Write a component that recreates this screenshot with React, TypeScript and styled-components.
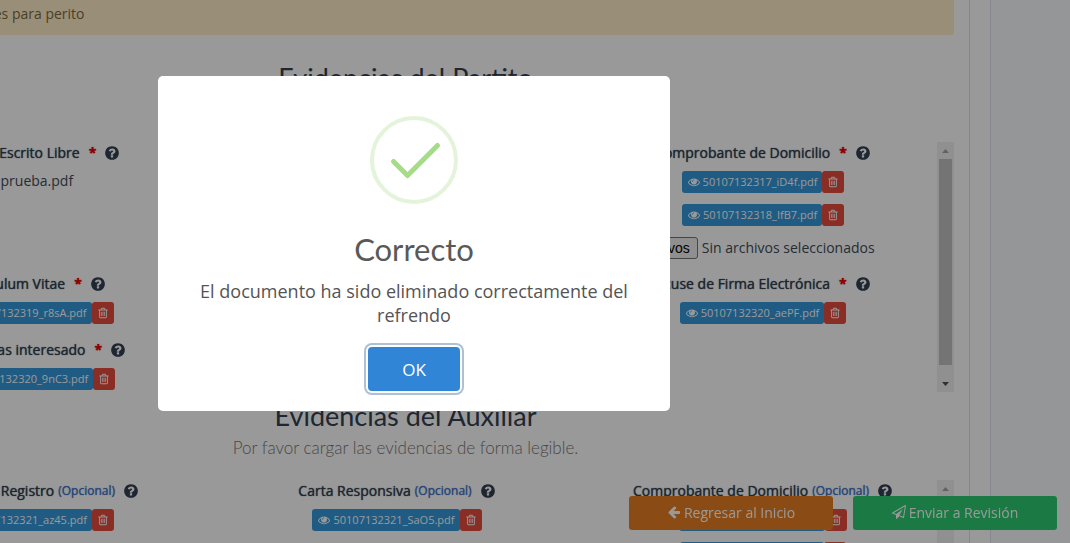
import React from 'react';
import styled, { createGlobalStyle } from 'styled-components';

const GlobalStyle = createGlobalStyle`
  * { box-sizing: border-box; }
  html, body, #root { height: 100%; }
  body {
    margin: 0;
    overflow: hidden;
    background: #f9fafc;
    color: #3e4b5b;
    font-family: 'Open Sans', sans-serif;
    font-size: 14px;
    line-height: 22px;
  }
  button { font-family: inherit; }
`;

const paths = {
  eye: 'M1664 960q-152-236-381-353 61 104 61 225 0 185-131.5 316.5t-316.5 131.5-316.5-131.5-131.5-316.5q0-121 61-225-229 117-381 353 133 205 333.5 326.5t434.5 121.5 434.5-121.5 333.5-326.5zm-720-384q0-20-14-34t-34-14q-125 0-214.5 89.5t-89.5 214.5q0 20 14 34t34 14 34-14 14-34q0-86 61-147t147-61q20 0 34-14t14-34zm848 384q0 34-20 69-140 230-376.5 368.5t-499.5 138.5-499.5-139-376.5-368q-20-35-20-69t20-69q140-229 376.5-368t499.5-139 499.5 139 376.5 368q20 35 20 69z',
  trash: 'M704 736v576q0 14-9 23t-23 9h-64q-14 0-23-9t-9-23v-576q0-14 9-23t23-9h64q14 0 23 9t9 23zm256 0v576q0 14-9 23t-23 9h-64q-14 0-23-9t-9-23v-576q0-14 9-23t23-9h64q14 0 23 9t9 23zm256 0v576q0 14-9 23t-23 9h-64q-14 0-23-9t-9-23v-576q0-14 9-23t23-9h64q14 0 23 9t9 23zm128 724v-948h-896v948q0 22 7 40.5t14.5 27 10.5 8.5h832q3 0 10.5-8.5t14.5-27 7-40.5zm-672-1076h448l-48-117q-7-9-17-11h-317q-10 2-17 11zm928 32v64q0 14-9 23t-23 9h-96v948q0 83-47 143.5t-113 60.5h-832q-66 0-113-58.5t-47-141.5v-952h-96q-14 0-23-9t-9-23v-64q0-14 9-23t23-9h309l70-167q15-37 54-63t79-26h320q40 0 79 26t54 63l70 167h309q14 0 23 9t9 23z',
  help: 'M1024 1376v-192q0-14-9-23t-23-9h-192q-14 0-23 9t-9 23v192q0 14 9 23t23 9h192q14 0 23-9t9-23zm256-672q0-88-55.5-163t-138.5-116-170-41q-243 0-371 213-15 24 8 42l132 100q7 6 19 6 16 0 25-12 53-68 86-92 34-24 86-24 48 0 85.5 26t37.5 59q0 38-20 61t-68 45q-63 28-115.5 86.5t-52.5 125.5v36q0 14 9 23t23 9h192q14 0 23-9t9-23q0-19 21.5-49.5t54.5-49.5q32-18 49-28.5t46-35 44.5-48 28-60.5 12.5-81zm384 192q0 209-103 385.5t-279.5 279.5-385.5 103-385.5-103-279.5-279.5-103-385.5 103-385.5 279.5-279.5 385.5-103 385.5 103 279.5 279.5 103 385.5z',
  back: 'M1664 896v128q0 53-32.5 90.5t-84.5 37.5h-704l293 294q38 36 38 90t-38 90l-75 76q-37 37-90 37-52 0-91-37l-651-652q-37-37-37-90 0-52 37-91l651-650q38-38 91-38 52 0 90 38l75 74q38 38 38 91t-38 91l-293 293h704q52 0 84.5 37.5t32.5 90.5z',
  send: 'M1764 11q33 24 27 64l-256 1536q-5 29-32 45-14 8-31 8-11 0-24-5l-527-215-298 327q-18 21-47 21-14 0-23-4-19-7-30-23.5t-11-36.5v-452l-472-193q-37-14-40-55-3-39 32-59l1664-960q35-21 68 2zm-342 1499l221-1323-1434 827 336 137 863-639-478 797z',
};

const Svg = styled.svg<{ $size: number }>`
  width: ${(p) => p.$size}px;
  height: ${(p) => p.$size}px;
  flex: none;
  fill: currentColor;
`;

const Icon = ({ name, size }: { name: keyof typeof paths; size: number }) => (
  <Svg $size={size} viewBox="0 0 1792 1792" aria-hidden="true">
    <path d={paths[name]} />
  </Svg>
);

/* Page frame */

const Page = styled.div`
  height: 100%;
  overflow: hidden;
`;

const OuterCard = styled.div`
  height: 100%;
  margin: 0 79px 0 -179px;
  padding: 0 20px;
  background: #fff;
  border: solid #dee2ec;
  border-width: 0 1px;
`;

const InnerCard = styled.main`
  height: 100%;
  padding: 0 15px 0 14px;
  border: solid #dee2ec;
  border-width: 0 1px;
  overflow: hidden;
`;

const Alert = styled.div`
  height: 35px;
  padding: 3px 20px 10px 55px;
  background: #ffeeca;
  color: #7d6a3c;
  border-radius: 0 0 3px 3px;
`;

const Section = styled.section<{ $lead: number }>`
  padding-top: ${(p) => p.$lead}px;
`;

const Heading = styled.h2`
  margin: 0;
  font-family: Lato, sans-serif;
  font-size: 27px;
  line-height: 32px;
  font-weight: 400;
  color: #334152;
  text-align: center;
`;

const Hint = styled.p`
  margin: 0 0 16px;
  font-family: Lato, sans-serif;
  font-size: 17px;
  line-height: 32px;
  font-weight: 300;
  color: #777;
  text-align: center;
`;

/* Scrolling evidence lists */

const ScrollArea = styled.div`
  display: flex;
  height: 250px;
`;

const ScrollBody = styled.div`
  flex: 1;
  min-width: 0;
  overflow: hidden;
`;

const Columns = styled.div`
  display: grid;
  grid-template-columns: repeat(3, 1fr);
  margin: 0 -9px 15px;
`;

const Track = styled.div`
  display: flex;
  flex-direction: column;
  align-items: center;
  width: 17px;
  background: #f1f1f1;
`;

const ArrowBox = styled.svg`
  width: 17px;
  height: 17px;
  flex: none;
`;

const Thumb = styled.div<{ $length: number }>`
  width: 13px;
  height: ${(p) => p.$length}px;
  margin-bottom: auto;
  background: #c1c1c1;
`;

const ScrollBar = ({ length }: { length: number }) => (
  <Track aria-hidden="true">
    <ArrowBox viewBox="0 0 17 17">
      <path d="M5 11h7L8.500 7z" fill="#a3a3a3" />
    </ArrowBox>
    <Thumb $length={length} />
    <ArrowBox viewBox="0 0 17 17">
      <path d="M5 7h7L8.500 11z" fill="#505050" />
    </ArrowBox>
  </Track>
);

/* Evidence fields */

const Field = styled.div`
  display: flex;
  flex-direction: column;
  align-items: center;
  white-space: nowrap;
`;

const FieldLabel = styled.div`
  display: flex;
  align-items: center;
  margin-bottom: 7px;
  color: #334152;
  text-shadow: 0 0 1px currentColor;
`;

const Required = styled.span`
  margin-left: 9px;
  color: #e00;
  font-weight: 700;
`;

const Optional = styled.span`
  margin-left: 4px;
  font-size: 12px;
  color: #4573c4;
`;

const HelpButton = styled.button`
  display: flex;
  margin: 0 0 0 8px;
  padding: 0;
  border: 0;
  background: none;
  color: #334152;
`;

const FileStack = styled.div`
  display: flex;
  flex-direction: column;
  align-items: center;
  gap: 11px;
  width: 100%;
`;

const FileRow = styled.div`
  display: flex;
`;

const FileLink = styled.a`
  display: flex;
  align-items: center;
  gap: 3px;
  height: 22px;
  padding: 0 5px 0 6px;
  border-radius: 3px;
  background: #3498db;
  color: #fff;
  font-size: 11px;
  text-decoration: none;
`;

const DeleteButton = styled.button`
  display: flex;
  align-items: center;
  justify-content: center;
  width: 22px;
  height: 22px;
  padding: 0;
  border: 0;
  border-radius: 3px;
  background: #e74c3c;
  color: #fff;
`;

const FileName = styled.span`
  line-height: 20px;
`;

const Picker = styled.label`
  display: flex;
  align-items: center;
  gap: 4px;
  width: 100%;
  height: 21px;
  padding-left: 10px;
`;

const HiddenInput = styled.input`
  position: absolute;
  opacity: 0;
  width: 1px;
  height: 1px;
`;

const PickerButton = styled.span`
  padding: 0 7px;
  border: 1px solid #767676;
  border-radius: 3px;
  background: #efefef;
  color: #000;
  font: 14px/20px 'Liberation Sans', sans-serif;
`;

const FilePicker = ({ status }: { status: string }) => (
  <Picker>
    <HiddenInput type="file" multiple />
    <PickerButton>Elegir archivos</PickerButton>
    <span>{status}</span>
  </Picker>
);

type EvidenceProps = {
  title: string;
  optional?: boolean;
  files?: string[];
  attached?: string;
  picker?: string;
};

const Evidence = ({ title, optional, files = [], attached, picker }: EvidenceProps) => (
  <Field>
    <FieldLabel>
      <span>{title}</span>
      {optional ? <Optional>(Opcional)</Optional> : <Required>*</Required>}
      <HelpButton type="button" aria-label="Ayuda">
        <Icon name="help" size={16} />
      </HelpButton>
    </FieldLabel>
    <FileStack>
      {attached && <FileName>{attached}</FileName>}
      {files.map((f) => (
        <FileRow key={f}>
          <FileLink href="#">
            <Icon name="eye" size={12} />
            {f}
          </FileLink>
          <DeleteButton type="button" aria-label={`Eliminar ${f}`}>
            <Icon name="trash" size={12} />
          </DeleteButton>
        </FileRow>
      ))}
      {picker && <FilePicker status={picker} />}
    </FileStack>
  </Field>
);

/* Floating actions */

const Actions = styled.div`
  position: fixed;
  right: 13px;
  bottom: 13px;
  display: flex;
  gap: 20px;
`;

const ActionButton = styled.button<{ $tone: string }>`
  display: flex;
  align-items: center;
  justify-content: center;
  gap: 3px;
  width: 204px;
  height: 34px;
  padding: 0 6px 2px;
  border: 0;
  border-radius: 3px;
  background: ${(p) => p.$tone};
  color: #fff;
  font-size: 14px;
`;

/* Dialog */

const Overlay = styled.div`
  position: fixed;
  inset: 0;
  display: flex;
  justify-content: center;
  align-items: flex-start;
  padding: 76px 242px 0 0;
  background: rgba(0, 0, 0, 0.4);
`;

const Dialog = styled.div`
  display: flex;
  flex-direction: column;
  align-items: center;
  width: 512px;
  padding: 40px 36px 20px;
  border-radius: 5px;
  background: #fff;
  text-align: center;
`;

const SuccessMark = styled.svg`
  width: 88px;
  height: 88px;
`;

const DialogTitle = styled.h2`
  margin: 27px 0 12px;
  font-family: Lato, sans-serif;
  font-size: 31px;
  line-height: 36px;
  font-weight: 400;
  color: #595959;
`;

const DialogText = styled.p`
  margin: 0 0 20px;
  font-size: 18px;
  line-height: 24px;
  color: #545454;
`;

const ConfirmButton = styled.button`
  width: 92px;
  height: 44px;
  border: 0;
  border-radius: 4px;
  background: #3085d6;
  box-shadow: 0 0 0 2px #fff, 0 0 0 4px rgba(50, 100, 150, 0.4);
  color: #fff;
  font-size: 17px;
`;

export default function App() {
  return (
    <>
      <GlobalStyle />
      <Page>
        <OuterCard>
          <InnerCard>
            <Alert>Observaciones para perito</Alert>
            <Section $lead={27}>
              <Heading>Evidencias del Partito</Heading>
              <Hint>Por favor cargar las evidencias de forma legible.</Hint>
              <ScrollArea>
                <ScrollBody>
                  <Columns>
                    <Evidence title="Cartas o Escrito Libre" attached="1 prueba.pdf" />
                    <div />
                    <Evidence
                      title="Comprobante de Domicilio"
                      files={['50107132317_iD4f.pdf', '50107132318_IfB7.pdf']}
                      picker="Sin archivos seleccionados"
                    />
                  </Columns>
                  <Columns>
                    <Evidence title="Curriculum Vitae" files={['50107132319_r8sA.pdf']} />
                    <div />
                    <Evidence title="Acuse de Firma Electrónica" files={['50107132320_aePF.pdf']} />
                  </Columns>
                  <Columns>
                    <Evidence title="Referencias interesado" files={['50107132320_9nC3.pdf']} />
                  </Columns>
                </ScrollBody>
                <ScrollBar length={206} />
              </ScrollArea>
            </Section>
            <Section $lead={8}>
              <Heading>Evidencias del Auxiliar</Heading>
              <Hint>Por favor cargar las evidencias de forma legible.</Hint>
              <ScrollArea>
                <ScrollBody>
                  <Columns>
                    <Evidence title="Número de Registro" optional files={['50107132321_az45.pdf']} />
                    <Evidence title="Carta Responsiva" optional files={['50107132321_SaO5.pdf']} />
                    <Evidence
                      title="Comprobante de Domicilio"
                      optional
                      files={['50107132321_bT6d.pdf', '50107132322_aePF.pdf']}
                    />
                  </Columns>
                </ScrollBody>
                <ScrollBar length={30} />
              </ScrollArea>
            </Section>
          </InnerCard>
        </OuterCard>
      </Page>
      <Actions>
        <ActionButton type="button" $tone="#e67e22">
          <Icon name="back" size={14} />
          Regresar al Inicio
        </ActionButton>
        <ActionButton type="button" $tone="#2ecc71">
          <Icon name="send" size={14} />
          Enviar a Revisión
        </ActionButton>
      </Actions>
      <Overlay>
        <Dialog role="dialog" aria-modal="true" aria-labelledby="dialog-title">
          <SuccessMark viewBox="0 0 88 88" aria-hidden="true">
            <circle cx="44" cy="44" r="42" fill="none" stroke="#e4f4db" strokeWidth="4" />
            <path
              d="M23.500 45.500L37.500 59.500L67.500 29.500"
              fill="none"
              stroke="#a5dc86"
              strokeWidth="5"
              strokeLinecap="round"
              strokeLinejoin="round"
            />
          </SuccessMark>
          <DialogTitle id="dialog-title">Correcto</DialogTitle>
          <DialogText>El documento ha sido eliminado correctamente del refrendo</DialogText>
          <ConfirmButton type="button">OK</ConfirmButton>
        </Dialog>
      </Overlay>
    </>
  );
}
